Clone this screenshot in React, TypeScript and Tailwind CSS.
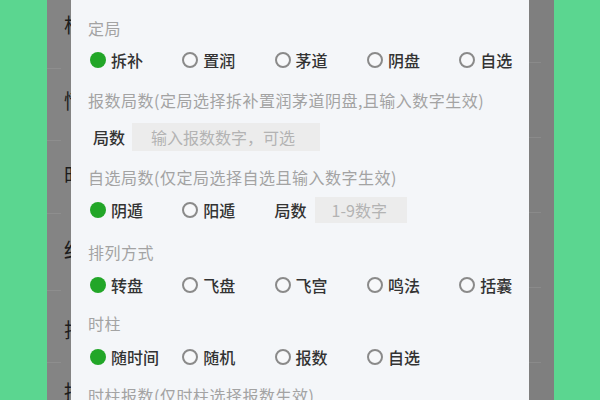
import React from "react";

const FONT = { fontFamily: '"Noto Sans CJK SC", "Noto Sans", sans-serif' };

function Radio({ label, selected }: { label: string; selected?: boolean }) {
  return (
    <div className="flex w-[92.3px] shrink-0 items-center gap-[5px]">
      {selected ? (
        <span className="h-[16px] w-[16px] shrink-0 rounded-full bg-[#22a628]" />
      ) : (
        <span className="h-[16px] w-[16px] shrink-0 rounded-full border-2 border-[#8a8a8a] bg-[#f7f8fa]" />
      )}
      <span className="text-[16px] leading-[24px] font-medium text-[#333333]">{label}</span>
    </div>
  );
}

function Label({ text, className }: { text: string; className?: string }) {
  return (
    <div className={"h-[24px] shrink-0 text-[16px] leading-[24px] tracking-[0.5px] text-[#a3a3a3] whitespace-nowrap " + (className ?? "")}>
      {text}
    </div>
  );
}

const leftChars = [
  { c: "构", top: 14 },
  { c: "情", top: 90 },
  { c: "时", top: 164 },
  { c: "结", top: 239 },
  { c: "排", top: 319 },
  { c: "持", top: 381 },
];
const leftLines = [68, 140, 213, 290, 362];
const rightLines = [62, 137, 212, 287, 362];

export default function App() {
  return (
    <div className="flex h-[400px] w-[600px] overflow-hidden bg-[#5bd690]" style={FONT}>
      <div className="w-[47px] shrink-0 bg-[#5bd690]" />
      <div className="relative w-[24px] shrink-0 overflow-hidden bg-[#848484]">
        {leftLines.map((t) => (
          <div key={t} className="absolute left-0 h-px w-[14px] bg-[#8e8e8e]" style={{ top: t }} />
        ))}
        {leftChars.map((x) => (
          <span
            key={x.top}
            className="absolute left-[17px] text-[20px] leading-[22px] text-[#1c1c1c]"
            style={{ top: x.top }}
          >
            {x.c}
          </span>
        ))}
      </div>
      <div className="flex w-[458px] shrink-0 flex-col overflow-hidden bg-[#f4f6f9] pl-[17px] pt-[16px]">
        <Label text="定局" />
        <div className="mt-[4px] flex h-[32px] shrink-0 items-center pl-[2px]">
          <Radio label="拆补" selected />
          <Radio label="置润" />
          <Radio label="茅道" />
          <Radio label="阴盘" />
          <Radio label="自选" />
        </div>
        <Label className="mt-[12px]" text="报数局数(定局选择拆补置润茅道阴盘,且输入数字生效)" />
        <div className="mt-[11px] flex h-[28px] shrink-0 items-center pl-[5px]">
          <span className="text-[16px] leading-[24px] font-medium text-[#333333]">局数</span>
          <div className="ml-[7px] flex h-[28px] w-[188px] items-center bg-[#ececec] pl-[19px] text-[16px] text-[#b3b3b3]">
            输入报数数字，可选
          </div>
        </div>
        <Label className="mt-[14px]" text="自选局数(仅定局选择自选且输入数字生效)" />
        <div className="mt-[5px] flex h-[32px] shrink-0 items-center pl-[2px]">
          <Radio label="阴遁" selected />
          <Radio label="阳遁" />
          <span className="text-[16px] leading-[24px] font-medium text-[#333333]">局数</span>
          <div className="ml-[8px] flex h-[26px] w-[92px] items-center bg-[#ececec] pl-[17px] text-[16px] text-[#b3b3b3]">
            1-9数字
          </div>
        </div>
        <Label className="mt-[14px]" text="排列方式" />
        <div className="mt-[5px] flex h-[32px] shrink-0 items-center pl-[2px]">
          <Radio label="转盘" selected />
          <Radio label="飞盘" />
          <Radio label="飞宫" />
          <Radio label="鸣法" />
          <Radio label="括囊" />
        </div>
        <Label className="mt-[10px]" text="时柱" />
        <div className="mt-[6px] flex h-[32px] shrink-0 items-center pl-[2px]">
          <Radio label="随时间" selected />
          <Radio label="随机" />
          <Radio label="报数" />
          <Radio label="自选" />
        </div>
        <Label className="mt-[10px]" text="时柱报数(仅时柱选择报数生效)" />
      </div>
      <div className="relative w-[25px] shrink-0 bg-[#7f7f7f]">
        {rightLines.map((t) => (
          <div key={t} className="absolute left-0 h-px w-[12px] bg-[#8a8a8a]" style={{ top: t }} />
        ))}
      </div>
      <div className="flex-1 bg-[#5bd690]" />
    </div>
  );
}
